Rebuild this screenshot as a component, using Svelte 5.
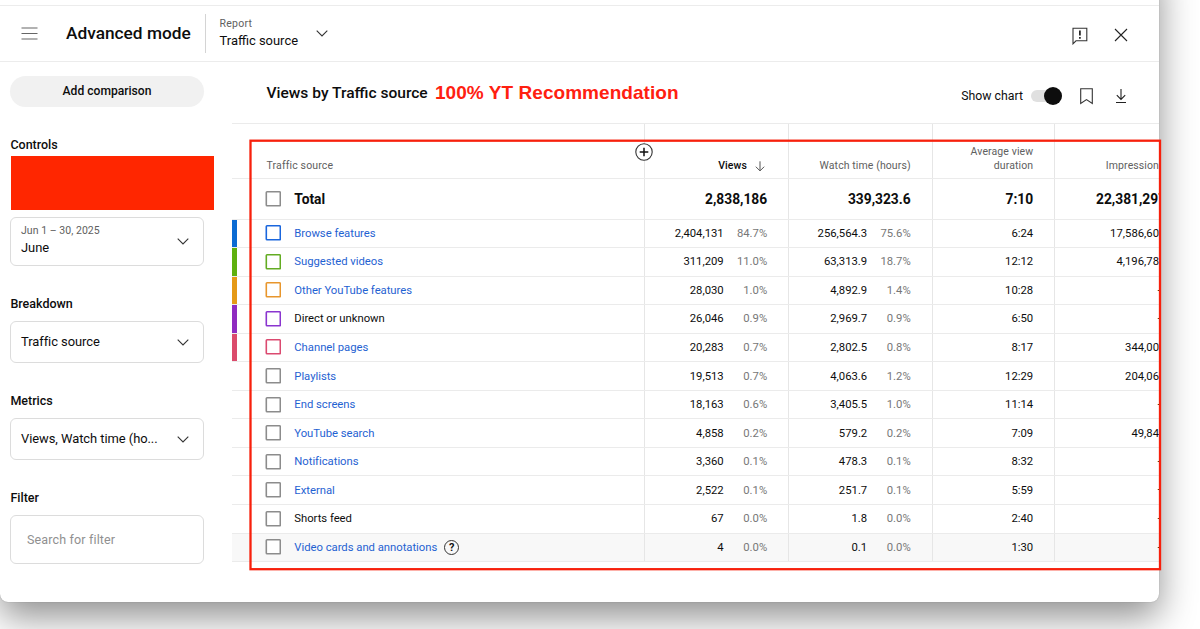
<script>
  const rows = [
    { name: 'Browse features', link: true, color: '#0b6bd3', box: '#1a66dd', views: '2,404,131', vp: '84.7%', watch: '256,564.3', wp: '75.6%', avg: '6:24', imp: '17,586,60' },
    { name: 'Suggested videos', link: true, color: '#5fb00f', box: '#63ac22', views: '311,209', vp: '11.0%', watch: '63,313.9', wp: '18.7%', avg: '12:12', imp: '4,196,78' },
    { name: 'Other YouTube features', link: true, color: '#e59a17', box: '#e8962c', views: '28,030', vp: '1.0%', watch: '4,892.9', wp: '1.4%', avg: '10:28', imp: '—' },
    { name: 'Direct or unknown', link: false, color: '#8f2bc0', box: '#8a35cf', views: '26,046', vp: '0.9%', watch: '2,969.7', wp: '0.9%', avg: '6:50', imp: '—' },
    { name: 'Channel pages', link: true, color: '#db4b6c', box: '#db4a70', views: '20,283', vp: '0.7%', watch: '2,802.5', wp: '0.8%', avg: '8:17', imp: '344,00' },
    { name: 'Playlists', link: true, views: '19,513', vp: '0.7%', watch: '4,063.6', wp: '1.2%', avg: '12:29', imp: '204,06' },
    { name: 'End screens', link: true, views: '18,163', vp: '0.6%', watch: '3,405.5', wp: '1.0%', avg: '11:14', imp: '—' },
    { name: 'YouTube search', link: true, views: '4,858', vp: '0.2%', watch: '579.2', wp: '0.2%', avg: '7:09', imp: '49,84' },
    { name: 'Notifications', link: true, views: '3,360', vp: '0.1%', watch: '478.3', wp: '0.1%', avg: '8:32', imp: '—' },
    { name: 'External', link: true, views: '2,522', vp: '0.1%', watch: '251.7', wp: '0.1%', avg: '5:59', imp: '—' },
    { name: 'Shorts feed', link: false, views: '67', vp: '0.0%', watch: '1.8', wp: '0.0%', avg: '2:40', imp: '—' },
    { name: 'Video cards and annotations', link: true, help: true, views: '4', vp: '0.0%', watch: '0.1', wp: '0.0%', avg: '1:30', imp: '—' }
  ];
</script>

{#snippet chevron()}
  <svg class="chev" width="12" height="7" viewBox="0 0 12 7"><path d="M.7.7 6 6 11.3.7" fill="none" stroke="#333" stroke-width="1.1" /></svg>
{/snippet}

{#snippet check(color)}
  <svg class="check" width="16" height="16" viewBox="0 0 16 16"><rect x="1.300" y=".8" width="14" height="14" rx=".8" fill="#fff" stroke={color} stroke-width="1.600" /></svg>
{/snippet}

<div class="page">
  <div class="window">
    <header>
      <svg class="menu" width="17" height="13" viewBox="0 0 17 13"><path d="M.5 1h16M.5 6.5h16M.5 12h16" stroke="#666" stroke-width="1.1" /></svg>
      <h1>Advanced mode</h1>
      <div class="report">
        <div>
          <div class="small">Report</div>
          <div class="value">Traffic source</div>
        </div>
        {@render chevron()}
      </div>
      <div class="actions">
        <svg width="16" height="18" viewBox="0 0 16 18">
          <path d="M1 16.8V1.2h13.8v12.600H4z" fill="none" stroke="#333" stroke-width="1.1" />
          <path d="M7.900 3.600v5M7.900 9.900v1.800" stroke="#111" stroke-width="1.6" />
        </svg>
        <svg width="14" height="14" viewBox="0 0 14 14"><path d="M1 1l12 12M13 1 1 13" stroke="#222" stroke-width="1.1" /></svg>
      </div>
    </header>

    <div class="body">
      <aside>
        <button class="add">Add comparison</button>
        <h2>Controls</h2>
        <div class="redacted"></div>
        <div class="select date">
          <div>
            <div class="small">Jun 1 – 30, 2025</div>
            <div class="value">June</div>
          </div>
          {@render chevron()}
        </div>
        <h2>Breakdown</h2>
        <div class="select"><div class="value">Traffic source</div>{@render chevron()}</div>
        <h2>Metrics</h2>
        <div class="select"><div class="value">Views, Watch time (ho...</div>{@render chevron()}</div>
        <h2>Filter</h2>
        <div class="select search">Search for filter</div>
      </aside>

      <main>
        <div class="titlebar">
          <h3>Views by Traffic source</h3>
          <span class="note">100% YT Recommendation</span>
          <div class="tools">
            <span class="showchart">Show chart</span>
            <span class="toggle"><i></i></span>
            <svg class="bookmark" width="13" height="17" viewBox="0 0 13 17"><path d="M.7.7h11.6v14.8L6.5 11.6.7 15.500z" fill="none" stroke="#333" stroke-width="1.1" /></svg>
            <svg width="12" height="15" viewBox="0 0 12 15"><path d="M6 0v10.200M1.800 6.200 6 10.400l4.200-4.200M1 13.500h10" fill="none" stroke="#222" stroke-width="1.1" /></svg>
          </div>
        </div>

        <div class="table">
          <div class="row head">
            <div class="cell name">Traffic source</div>
            <div class="cell sorted">
              Views
              <svg width="10" height="11" viewBox="0 0 10 11"><path d="M5 .3v9.500M.8 5.700 5 9.900l4.200-4.200" fill="none" stroke="#555" stroke-width="1" /></svg>
              <svg class="plus" width="18" height="18" viewBox="0 0 18 18">
                <circle cx="9" cy="9" r="8.200" fill="#fff" stroke="#333" stroke-width="1.100" />
                <path d="M9 4.700v8.600M4.700 9h8.600" stroke="#111" stroke-width="1.500" />
              </svg>
            </div>
            <div class="cell">Watch time (hours)</div>
            <div class="cell">Average view<br />duration</div>
            <div class="cell cut">Impression</div>
          </div>
          <div class="row total">
            <div class="cell name">{@render check('#8c8c8c')}Total</div>
            <div class="cell">2,838,186</div>
            <div class="cell">339,323.6</div>
            <div class="cell">7:10</div>
            <div class="cell cut long">22,381,297</div>
          </div>
          {#each rows as r}
            <div class="row" class:hover={r.help}>
              <div class="cell name" class:link={r.link}>
                {#if r.color}<span class="bar" style:background={r.color}></span>{/if}
                {@render check(r.box ?? '#8c8c8c')}
                {r.name}
                {#if r.help}<span class="help">?</span>{/if}
              </div>
              <div class="cell">{r.views}<span class="pct">{r.vp}</span></div>
              <div class="cell">{r.watch}<span class="pct">{r.wp}</span></div>
              <div class="cell">{r.avg}</div>
              <div class="cell cut" class:dash={r.imp === '—'}>{r.imp}</div>
            </div>
          {/each}
        </div>
      </main>
    </div>
  </div>
  <svg class="frame" width="914" height="434" viewBox="0 0 914 434"><rect x="2.500" y="2.700" width="909.500" height="428.500" fill="none" stroke="#f7200c" stroke-width="2.300" /></svg>
</div>

<style>
  :global(body) { background: #fff; }
  * { box-sizing: border-box; }
  svg { display: block; flex: none; }
  .page {
    position: relative;
    width: 1200px;
    height: 629px;
    overflow: hidden;
    font-family: Roboto, sans-serif;
    color: #0d0d0d;
  }
  .window {
    width: 1159px;
    height: 642px;
    margin-top: -40px;
    padding-top: 45px;
    background: #fff;
    border-radius: 0 0 8px 8px;
    box-shadow: 0 0 1px rgba(0, 0, 0, .35), 0 15px 36px rgba(0, 0, 0, .44);
  }
  h1, h2, h3 { margin: 0; font-weight: 500; }
  header {
    display: flex;
    align-items: center;
    height: 57px;
    border-top: 1px solid #ececec;
    border-bottom: 1px solid #ececec;
    padding-left: 21px;
  }
  h1 { font-size: 17.300px; width: 139px; margin: -1px 0 0 28px; white-space: nowrap; }
  .report {
    display: flex;
    align-items: center;
    height: 39px;
    margin-top: -1px;
    padding-left: 13.500px;
    border-left: 1px solid #d4d4d4;
  }
  .report > div { padding-top: 1px; }
  .report .chev { margin-left: 18px; }
  .small { font-size: 10.500px; line-height: 14px; color: #606060; letter-spacing: .25px; }
  .date .small { letter-spacing: .04px; }
  .value { font-size: 12.950px; line-height: 18px; white-space: nowrap; }
  .report .value { line-height: 20px; }
  .actions { display: flex; align-items: center; gap: 26px; margin: 2px 31px 0 auto; }
  .actions svg:first-child { margin-top: 2px; }
  .body { display: flex; }
  aside { width: 232px; padding: 14px 28px 0 10px; }
  .add {
    display: block;
    width: 194px;
    height: 31px;
    padding: 0 0 1px;
    border: 0;
    border-radius: 16px;
    background: #f1f1f1;
    color: #0d0d0d;
    font: 500 12.100px Roboto, sans-serif;
  }
  h2 { font-size: 12.500px; line-height: 16px; margin: 30px 0 0 .4px; }
  .redacted { width: 203.500px; height: 54px; margin: 3px 0 0 .5px; background: #ff2600; }
  .select {
    display: flex;
    align-items: center;
    justify-content: space-between;
    height: 42px;
    margin-top: 9px;
    padding: 0 14px 0 10px;
    border: 1px solid #dcdcdc;
    border-radius: 6px;
  }
  .select .value { letter-spacing: -.06px; }
  .date { height: 49px; margin-top: 7px; }
  .date .value { line-height: 20px; }
  .date > div { padding-bottom: 1px; }
  .search { height: 49px; padding: 0 0 0 16px; color: #909090; font-size: 12.500px; letter-spacing: .15px; }
  main { width: 927px; }
  .titlebar { display: flex; align-items: center; height: 61px; padding-left: 34.500px; }
  h3 { font-size: 15.550px; width: 168.500px; white-space: nowrap; }
  .note { font: bold 19px "Liberation Sans", sans-serif; color: #ff2010; letter-spacing: .05px; white-space: nowrap; }
  .tools { display: flex; align-items: center; margin: 7px 32px 0 auto; }
  .showchart { font-size: 12.300px; }
  .toggle {
    display: flex;
    justify-content: flex-end;
    align-items: center;
    width: 31px;
    height: 12px;
    margin: 0 18px 0 8px;
    border-radius: 6px;
    background: #e0e0e0;
  }
  .toggle i { width: 18px; height: 18px; border-radius: 50%; background: #0d0d0d; }
  .bookmark { margin-right: 22px; }

  .table { border-top: 1px solid #ebebeb; }
  .row {
    display: grid;
    grid-template-columns: 412px 144px 143.500px 122.500px 105px;
    height: 28.550px;
    border-bottom: 1px solid #ebebeb;
    font-size: 11.300px;
  }
  .cell {
    display: flex;
    align-items: center;
    justify-content: flex-end;
    min-width: 0;
    padding-right: 20.800px;
    border-left: 1px solid #e6e6e6;
    white-space: nowrap;
  }
  .cell.name { position: relative; justify-content: flex-start; border-left: 0; padding: 0 0 0 33px; letter-spacing: -.03px; }
  .cell.cut { padding-right: 0; overflow: hidden; }
  .cell.cut.dash { display: block; padding: 7px 0 0 102px; }
  .cell.cut.long { justify-content: flex-start; padding-left: 41px; }
  .pct { width: 43.500px; text-align: right; color: #777; }
  .link { color: #1f62d2; }
  .check { margin-right: 13.300px; }
  .bar { position: absolute; left: 0; top: 0; width: 5px; height: 27.500px; }
  .hover { background: #f8f8f8; }
  .head { height: 55px; color: #606060; font-size: 10.500px; line-height: 14px; letter-spacing: .1px; }
  .head .cell { align-items: flex-end; text-align: right; padding-bottom: 5px; }
  .head .cell.name { padding-left: 34.500px; letter-spacing: .15px; }
  .head .cell.sorted { position: relative; color: #0d0d0d; font-weight: 500; gap: 8px; padding-right: 23px; }
  .sorted svg { margin-bottom: 1px; }
  .sorted .plus { position: absolute; left: -10px; top: 19px; margin: 0; }
  .total { height: 40.500px; font-weight: 700; font-size: 13.800px; }
  .help {
    display: grid;
    place-items: center;
    width: 15px;
    height: 15px;
    margin-left: 7px;
    border: 1px solid #333;
    border-radius: 50%;
    color: #111;
    font-size: 11px;
    font-weight: 700;
  }
  .frame { position: absolute; left: 248px; top: 138px; }
</style>
